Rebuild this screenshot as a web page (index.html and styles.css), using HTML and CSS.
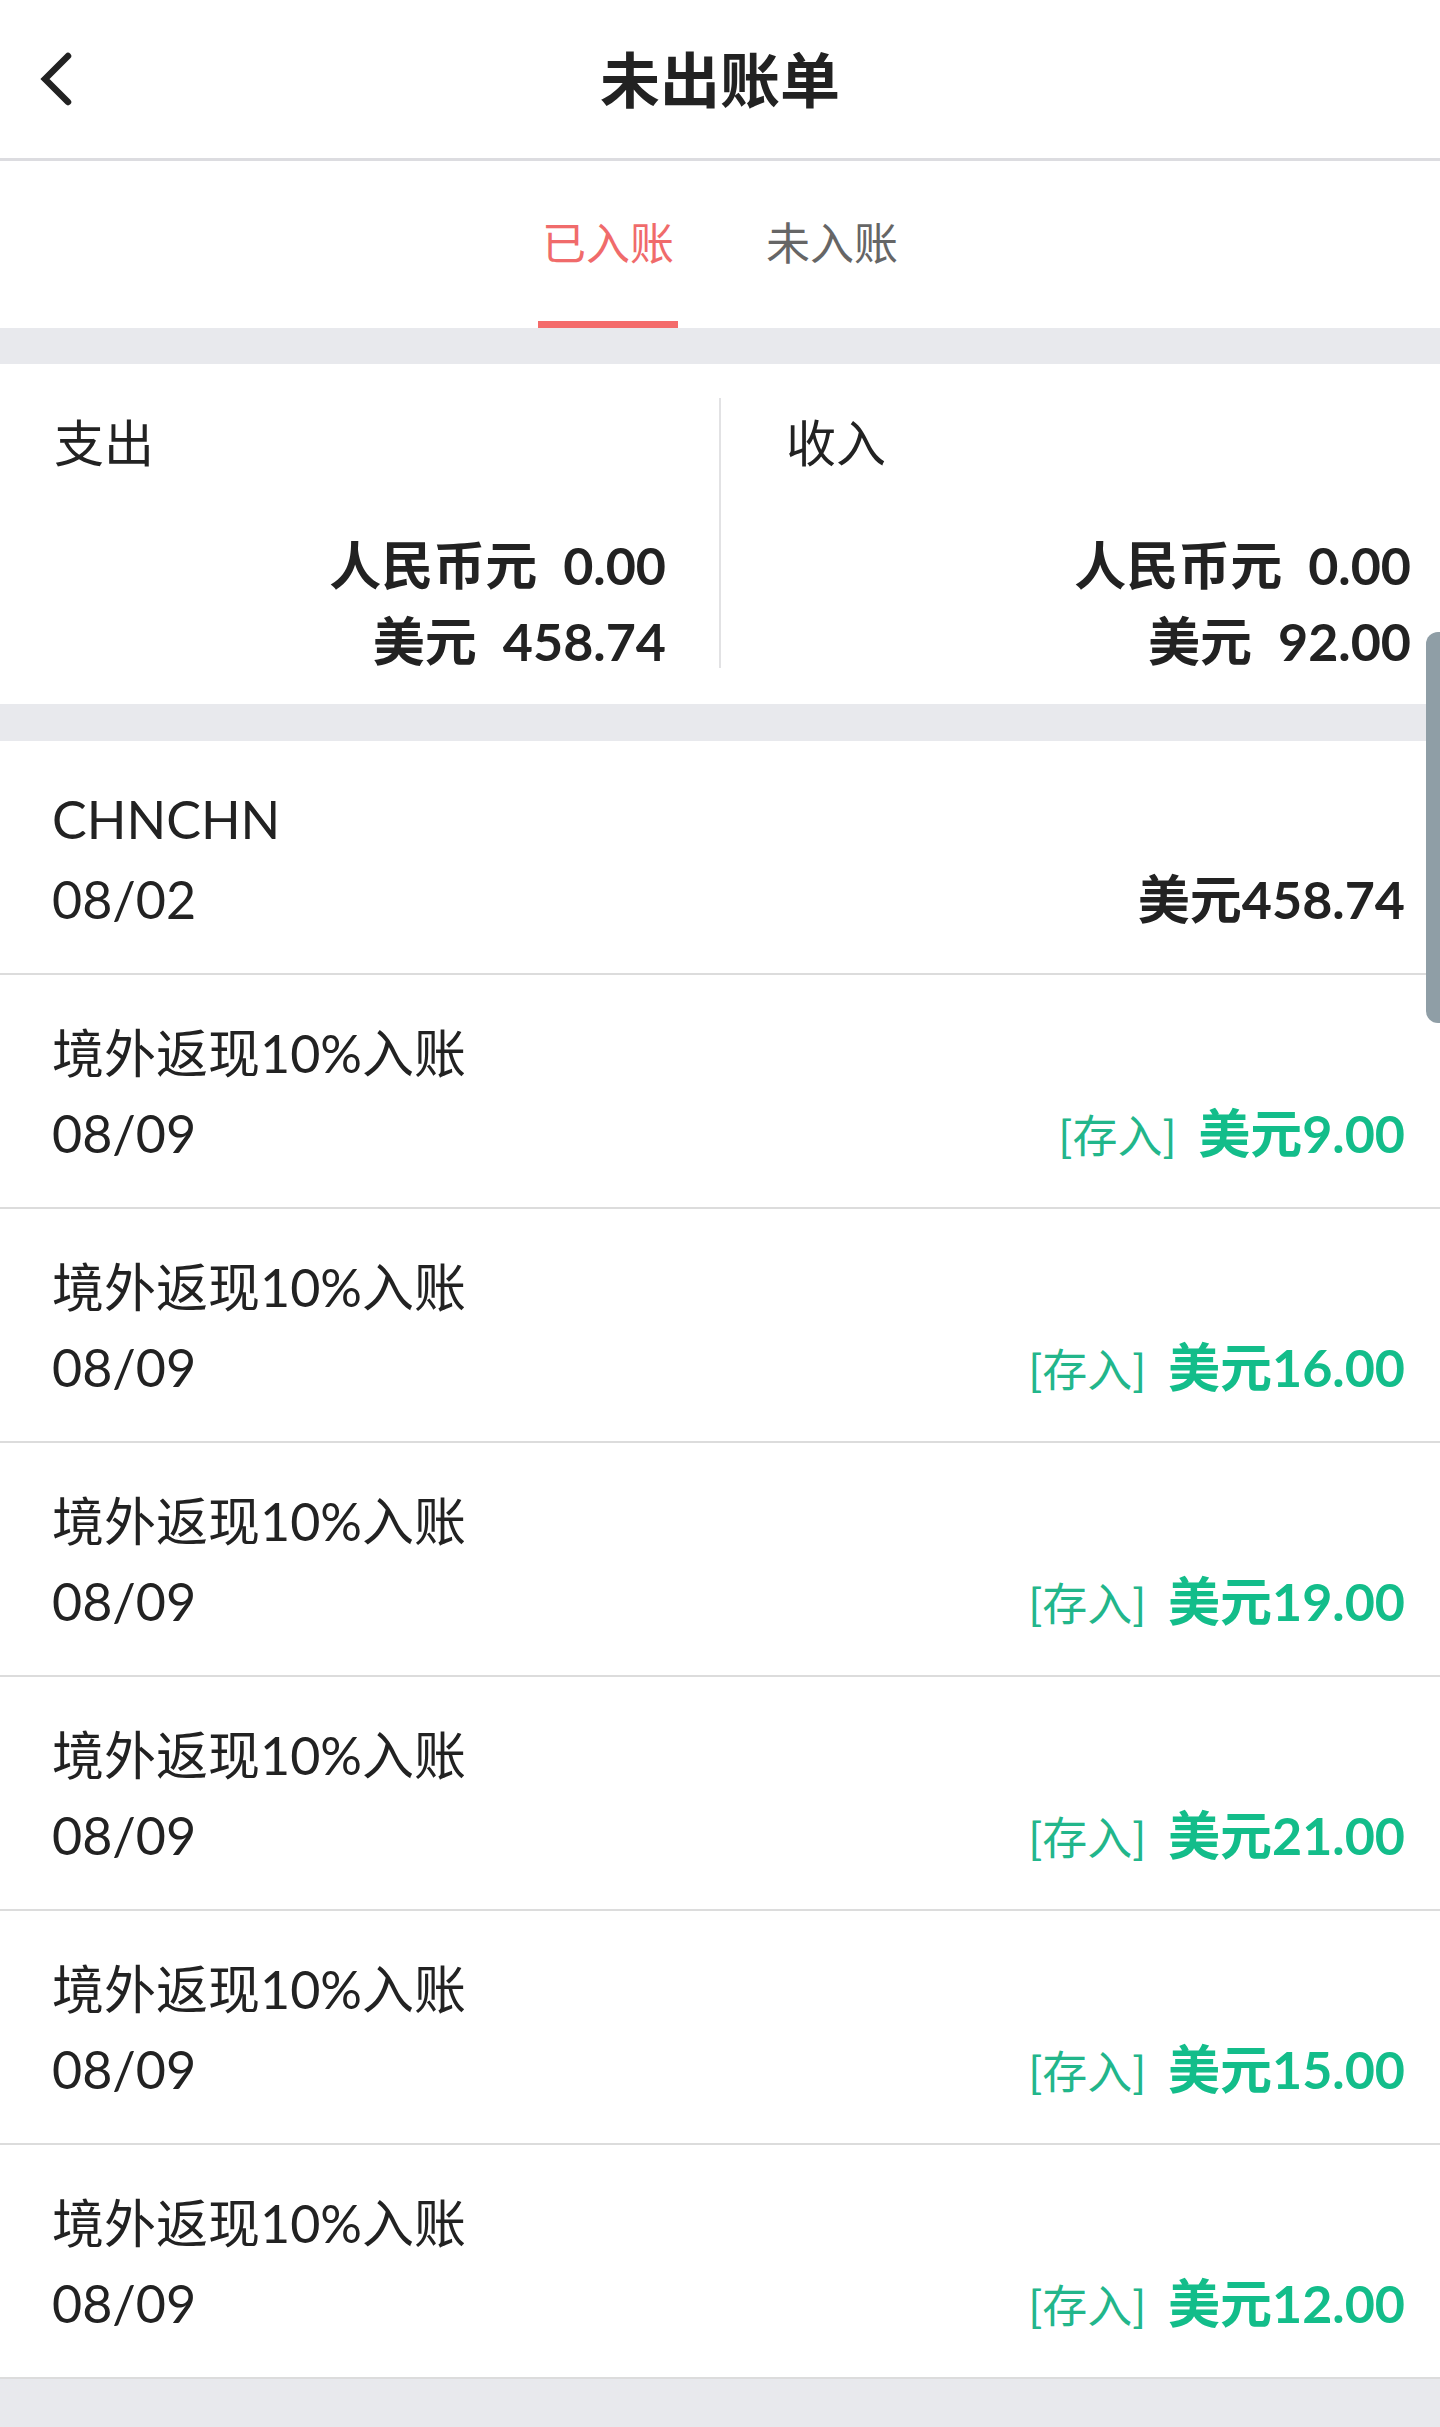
FILE: index.html
```html
<!DOCTYPE html>
<html lang="zh-CN">
<head>
<meta charset="utf-8">
<title>未出账单</title>
<link rel="stylesheet" href="styles.css">
</head>
<body>
<div class="page">
  <header class="topbar">
    <span class="back" aria-label="返回">
      <svg width="40" height="60" viewBox="0 0 40 60"><polyline points="28,6 5,29 28,52" fill="none" stroke="#222" stroke-width="6.5" stroke-linecap="round" stroke-linejoin="miter"/></svg>
    </span>
    <h1 class="title">未出账单</h1>
  </header>
  <nav class="tabs">
    <span class="tab active">已入账</span>
    <span class="tab">未入账</span>
  </nav>
  <section class="summary">
    <div class="col col-out">
      <div class="label">支出</div>
      <div class="amounts">
        <div class="amt-line">人民币元<span class="num">0.00</span></div>
        <div class="amt-line">美元<span class="num">458.74</span></div>
      </div>
    </div>
    <div class="divider"></div>
    <div class="col col-in">
      <div class="label">收入</div>
      <div class="amounts">
        <div class="amt-line">人民币元<span class="num">0.00</span></div>
        <div class="amt-line">美元<span class="num">92.00</span></div>
      </div>
    </div>
  </section>
  <ul class="list">
    <li class="row">
      <div class="name">CHNCHN</div>
      <div class="line2"><span class="date">08/02</span><span class="amt">美元458.74</span></div>
    </li>
    <li class="row">
      <div class="name">境外返现10%入账</div>
      <div class="line2"><span class="date">08/09</span><span class="amt green"><span class="tag">[存入]</span>美元9.00</span></div>
    </li>
    <li class="row">
      <div class="name">境外返现10%入账</div>
      <div class="line2"><span class="date">08/09</span><span class="amt green"><span class="tag">[存入]</span>美元16.00</span></div>
    </li>
    <li class="row">
      <div class="name">境外返现10%入账</div>
      <div class="line2"><span class="date">08/09</span><span class="amt green"><span class="tag">[存入]</span>美元19.00</span></div>
    </li>
    <li class="row">
      <div class="name">境外返现10%入账</div>
      <div class="line2"><span class="date">08/09</span><span class="amt green"><span class="tag">[存入]</span>美元21.00</span></div>
    </li>
    <li class="row">
      <div class="name">境外返现10%入账</div>
      <div class="line2"><span class="date">08/09</span><span class="amt green"><span class="tag">[存入]</span>美元15.00</span></div>
    </li>
    <li class="row">
      <div class="name">境外返现10%入账</div>
      <div class="line2"><span class="date">08/09</span><span class="amt green"><span class="tag">[存入]</span>美元12.00</span></div>
    </li>
  </ul>
  <div class="scrollbar"></div>
</div>
</body>
</html>
```

FILE: styles.css
```css
html, body {
  margin: 0;
  padding: 0;
  background: #e8e9ed;
}
body {
  font-family: "Lato", "Noto Sans CJK SC", sans-serif;
  color: #222222;
}
.page {
  position: relative;
  width: 1440px;
  min-height: 2427px;
}

/* header */
.topbar {
  height: 158px;
  background: #ffffff;
  border-bottom: 3px solid #dcdce0;
  display: flex;
  align-items: center;
  justify-content: center;
  position: relative;
}
.back {
  position: absolute;
  left: 40px;
  top: 50px;
  width: 40px;
  height: 60px;
}
.back svg { display: block; }
.title {
  margin: 0;
  font-size: 60px;
  font-weight: 700;
  line-height: 1;
  color: #222222;
  font-family: "Noto Sans CJK SC", sans-serif;
  transform: translateY(-2px);
}

/* tabs */
.tabs {
  height: 167px;
  background: #ffffff;
  display: flex;
  justify-content: center;
  gap: 84px;
}
.tab {
  box-sizing: border-box;
  height: 167px;
  line-height: 160px;
  padding: 0 4px;
  font-size: 44px;
  color: #666666;
  border-bottom: 7px solid transparent;
  font-family: "Noto Sans CJK SC", sans-serif;
}
.tab.active {
  color: #f06b6b;
  border-bottom-color: #f46b6b;
}

/* summary */
.summary {
  margin-top: 36px;
  height: 340px;
  box-sizing: border-box;
  padding-top: 34px;
  background: #ffffff;
  display: flex;
  align-items: flex-start;
}
.col {
  box-sizing: border-box;
  display: flex;
  flex-direction: column;
}
.col-out {
  width: 719px;
  padding: 0 53px 0 54px;
}
.col-in {
  flex: 1;
  padding: 0 29px 0 65px;
}
.divider {
  width: 2px;
  height: 270px;
  background: #e2e2e4;
}
.label {
  font-size: 50px;
  line-height: 84px;
  font-family: "Noto Sans CJK SC", sans-serif;
}
.amounts {
  margin-top: 44px;
  text-align: right;
}
.amt-line {
  font-size: 52px;
  line-height: 74px;
  font-weight: 700;
  font-family: "Noto Sans CJK SC", sans-serif;
}
.num {
  font-family: "Lato", sans-serif;
  font-weight: 700;
  font-size: 52px;
  margin-left: 26px;
}

/* list */
.list {
  list-style: none;
  margin: 37px 0 0 0;
  padding: 0;
}
.row {
  box-sizing: border-box;
  height: 234px;
  padding: 38px 35px 0 52px;
  background: #ffffff;
  border-bottom: 2px solid #dcdcdc;
}
.name {
  font-size: 52px;
  line-height: 80px;
  font-weight: 400;
}
.line2 {
  display: flex;
  justify-content: space-between;
  align-items: baseline;
  line-height: 80px;
}
.date {
  font-size: 52px;
  font-weight: 400;
}
.amt {
  font-size: 52px;
  font-weight: 700;
}
.amt.green {
  color: #13bd8a;
}
.tag {
  font-size: 45px;
  font-weight: 400;
  color: #22b68b;
  margin-right: 22px;
}

/* overlay scrollbar */
.scrollbar {
  position: absolute;
  right: 0;
  top: 632px;
  width: 14px;
  height: 391px;
  background: #8f9ea6;
  border-radius: 12px 0 0 12px;
}
```
